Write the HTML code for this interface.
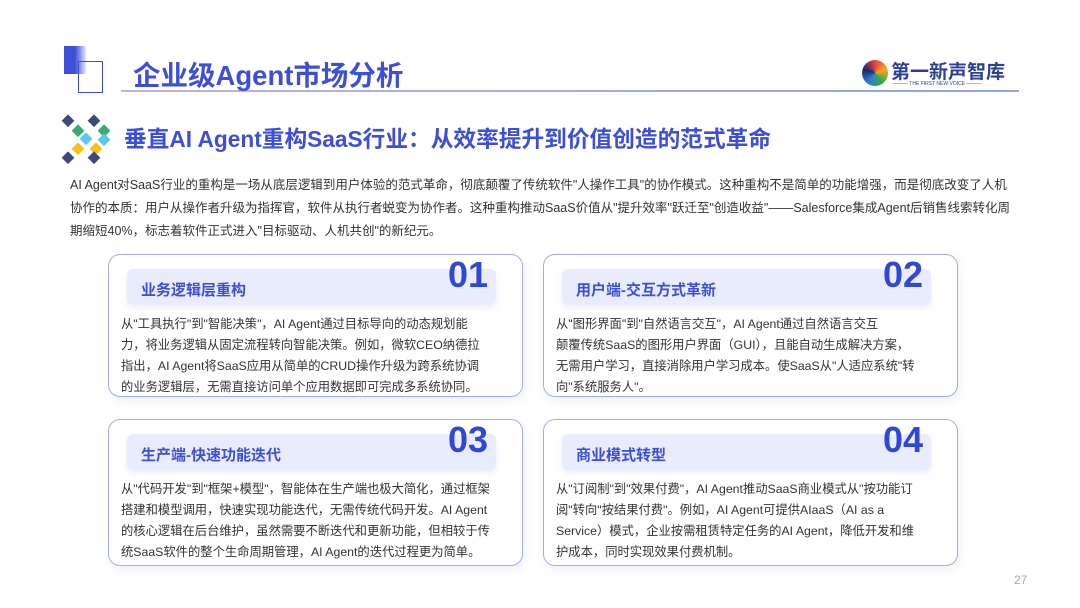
<!DOCTYPE html><html><head><meta charset="utf-8"><style>
*{margin:0;padding:0;box-sizing:border-box}
body{width:1080px;height:608px;background:#fff;position:relative;overflow:hidden;font-family:"Liberation Sans","Noto Sans CJK SC",sans-serif;color:#333}
.a{position:absolute}
.h1{left:133px;top:53px;font-size:27.5px;font-weight:bold;color:#3d4fd6}
.h2{left:124px;top:121px;font-size:22.7px;font-weight:bold;color:#3d4fd6}
.intro{left:70px;top:174px;width:945px;font-size:12.5px;line-height:23px;color:#333}
.card{position:absolute;width:415px;border:1.5px solid #a4acf0;border-radius:12px;background:#fff;box-shadow:2px 4px 8px rgba(150,160,220,.15)}
.bar{position:absolute;left:18px;top:14px;width:369px;height:36px;background:#e8ecfd;border-radius:6px;font-size:15px;font-weight:bold;color:#3d4fd6;padding:10px 0 0 14px;box-shadow:0 3px 6px rgba(160,170,230,.2)}
.num{position:absolute;right:34px;top:-1px;font-size:36px;font-weight:bold;color:#3148d4}
.txt{position:absolute;left:12px;top:59px;width:390px;font-size:12.3px;line-height:21px;color:#333}
</style></head><body>
<div class="a" style="left:64px;top:46px;width:22px;height:28px;background:linear-gradient(90deg,#3d4fd6,#3d4fd6 50%,#e4e6fb)"></div>
<div class="a" style="left:78px;top:61px;width:25px;height:32px;border:1.5px solid #3d4fd6"></div>
<div class="a" style="left:121px;top:90px;width:898px;height:2px;background:linear-gradient(90deg,#b9b2ea,#8ea5e0)"></div>
<div class="a h1">企业级Agent市场分析</div>
<div class="a" style="left:862px;top:60px;width:26px;height:26px;border-radius:50%;background:conic-gradient(#e8443a,#f5a623,#2ba84a,#2d7dd2,#1a2b6b,#e8443a)"></div>
<div class="a" style="left:891px;top:57px;font-size:19px;color:#2c3f94;font-weight:bold">第一新声智库</div>
<div class="a" style="left:893px;top:81px;font-size:5px;color:#2c3f94">——— THE FIRST NEW VOICE ———</div>
<svg class="a" style="left:60px;top:114px" width="56" height="50">
<rect x="4" y="2" width="9" height="9" fill="#3b4a7a" transform="rotate(45 8 6)"/>
<rect x="30" y="2" width="9" height="9" fill="#3b4a7a" transform="rotate(45 34 6)"/>
<rect x="14" y="12" width="9" height="9" fill="#3aa87a" transform="rotate(45 18 16)"/>
<rect x="40" y="12" width="9" height="9" fill="#3aa87a" transform="rotate(45 44 16)"/>
<rect x="22" y="20" width="9" height="9" fill="#5bc6ee" transform="rotate(45 26 24)"/>
<rect x="40" y="21" width="9" height="9" fill="#5bc6ee" transform="rotate(45 44 25)"/>
<rect x="14" y="30" width="9" height="9" fill="#f5c21a" transform="rotate(45 18 34)"/>
<rect x="32" y="30" width="9" height="9" fill="#f5c21a" transform="rotate(45 36 34)"/>
<rect x="4" y="39" width="9" height="9" fill="#3b4a7a" transform="rotate(45 8 43)"/>
<rect x="30" y="39" width="9" height="9" fill="#3b4a7a" transform="rotate(45 34 43)"/>
</svg>
<div class="a h2">垂直AI Agent重构SaaS行业：从效率提升到价值创造的范式革命</div>
<div class="a intro">AI Agent对SaaS行业的重构是一场从底层逻辑到用户体验的范式革命，彻底颠覆了传统软件"人操作工具"的协作模式。这种重构不是简单的功能增强，而是彻底改变了人机<br>协作的本质：用户从操作者升级为指挥官，软件从执行者蜕变为协作者。这种重构推动SaaS价值从"提升效率"跃迁至"创造收益"——Salesforce集成Agent后销售线索转化周<br>期缩短40%，标志着软件正式进入"目标驱动、人机共创"的新纪元。</div>

<div class="card" style="left:108px;top:254px;height:143px"><div class="bar">业务逻辑层重构</div><div class="num">01</div><div class="txt">从"工具执行"到"智能决策"，AI Agent通过目标导向的动态规划能<br>力，将业务逻辑从固定流程转向智能决策。例如，微软CEO纳德拉<br>指出，AI Agent将SaaS应用从简单的CRUD操作升级为跨系统协调<br>的业务逻辑层，无需直接访问单个应用数据即可完成多系统协同。</div></div>
<div class="card" style="left:543px;top:254px;height:143px"><div class="bar">用户端-交互方式革新</div><div class="num">02</div><div class="txt">从"图形界面"到"自然语言交互"，AI Agent通过自然语言交互<br>颠覆传统SaaS的图形用户界面（GUI），且能自动生成解决方案，<br>无需用户学习，直接消除用户学习成本。使SaaS从"人适应系统"转<br>向"系统服务人"。</div></div>
<div class="card" style="left:108px;top:419px;height:147px"><div class="bar">生产端-快速功能迭代</div><div class="num">03</div><div class="txt">从"代码开发"到"框架+模型"，智能体在生产端也极大简化，通过框架<br>搭建和模型调用，快速实现功能迭代，无需传统代码开发。AI Agent<br>的核心逻辑在后台维护，虽然需要不断迭代和更新功能，但相较于传<br>统SaaS软件的整个生命周期管理，AI Agent的迭代过程更为简单。</div></div>
<div class="card" style="left:543px;top:419px;height:147px"><div class="bar">商业模式转型</div><div class="num">04</div><div class="txt">从"订阅制"到"效果付费"，AI Agent推动SaaS商业模式从"按功能订<br>阅"转向"按结果付费"。例如，AI Agent可提供AIaaS（AI as a<br>Service）模式，企业按需租赁特定任务的AI Agent，降低开发和维<br>护成本，同时实现效果付费机制。</div></div>
<div class="a" style="left:1014px;top:573px;font-size:12px;color:#aaa">27</div>
</body></html>
